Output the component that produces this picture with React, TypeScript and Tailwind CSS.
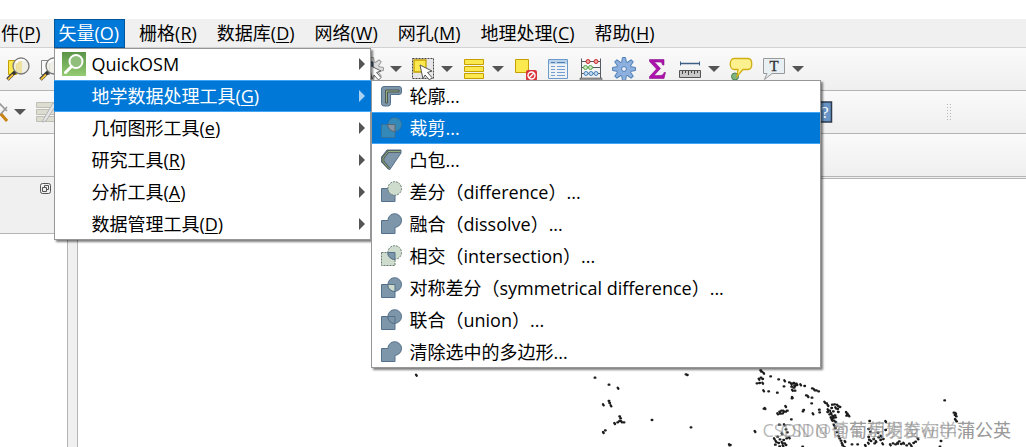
import type { ReactNode } from "react";

// ─── Types ──────────────────────────────────────────────────────────────────

interface MenuEntry {
  label: string;
  /** Mnemonic letter shown underlined in parentheses. */
  hotkey?: string;
  active?: boolean;
}

interface ToolEntry {
  name: string;
  icon?: ReactNode;
  dropdown?: boolean;
}

// ─── Data ───────────────────────────────────────────────────────────────────

const MENU_BAR: MenuEntry[] = [
  { label: "件", hotkey: "P" },
  { label: "矢量", hotkey: "O", active: true },
  { label: "栅格", hotkey: "R" },
  { label: "数据库", hotkey: "D" },
  { label: "网络", hotkey: "W" },
  { label: "网孔", hotkey: "M" },
  { label: "地理处理", hotkey: "C" },
  { label: "帮助", hotkey: "H" },
];

const VECTOR_MENU: MenuEntry[] = [
  { label: "QuickOSM" },
  { label: "地学数据处理工具", hotkey: "G", active: true },
  { label: "几何图形工具", hotkey: "e" },
  { label: "研究工具", hotkey: "R" },
  { label: "分析工具", hotkey: "A" },
  { label: "数据管理工具", hotkey: "D" },
];

// Map features, in thirds of a pixel
const POINTS: [number, number][] = [
  [-429, 41], [107, 50], [149, 71], [176, 80], [380, 40], [384, 42], [132, 130],
  [149, 120], [151, 126], [155, 133], [181, 166], [184, 172], [166, 186], [175, 184],
  [181, 180], [187, 181], [194, 184], [138, 208], [132, 213], [278, 177], [395, 199],
  [510, 250], [513, 252], [511, 253], [587, 210], [604, 28], [607, 32], [613, 35],
  [593, 67], [601, 66], [599, 53], [605, 50], [610, 54], [610, 65], [634, 46],
  [658, 55], [676, 58], [674, 76], [690, 64], [696, 67], [703, 66], [711, 68],
  [706, 73], [697, 77], [704, 80], [699, 86], [707, 89], [713, 72], [724, 70],
  [736, 75], [759, 82], [765, 85], [771, 88], [778, 91], [613, 88], [628, 91],
  [654, 95], [699, 108], [698, 112], [741, 103], [746, 105], [758, 110], [757, 127],
  [796, 122], [802, 127], [614, 143], [617, 141], [733, 147], [731, 151], [761, 157],
  [780, 146], [781, 154], [679, 135], [661, 152], [667, 149], [673, 149], [679, 152],
  [684, 149], [655, 157], [663, 158], [670, 157], [806, 132], [819, 131], [826, 130],
  [834, 131], [838, 136], [842, 138], [829, 139], [835, 144], [817, 141], [806, 145],
  [811, 149], [805, 153], [815, 155], [822, 151], [811, 160], [820, 164], [827, 163],
  [837, 153], [815, 169], [822, 171], [829, 169], [818, 176], [824, 179], [829, 183],
  [861, 153], [864, 158], [862, 164], [869, 163], [1156, 118], [1184, 155],
  [1189, 156], [1187, 162], [1191, 166], [1188, 174], [1192, 181], [696, 175],
  [675, 190], [660, 191], [680, 205], [668, 217], [684, 214], [931, 180], [979, 180],
  [1145, 240], [1142, 257], [645, 232], [655, 227], [662, 235], [650, 240],
  [673, 237], [682, 232], [690, 229], [648, 251], [658, 246], [668, 243], [676, 247],
  [661, 256], [671, 253], [680, 252], [730, 257], [824, 191], [828, 201], [833, 213],
  [838, 224], [841, 232], [845, 239], [848, 246], [850, 253], [855, 258], [857, 240],
  [878, 250], [895, 250], [918, 252], [928, 228], [930, 236], [927, 245], [935, 240],
  [943, 234], [950, 240], [946, 247], [958, 229], [965, 224], [964, 237], [972, 234],
  [970, 247], [956, 215], [979, 207], [993, 250], [1001, 247], [1009, 250],
  [1015, 245], [1020, 241], [1026, 249], [1033, 245], [1042, 253], [1050, 248],
  [1056, 253], [1063, 246], [1069, 242], [1076, 232], [928, 204], [933, 213],
];

// ─── Toolbar icons ──────────────────────────────────────────────────────────

function Icon({ children }: Readonly<{ children: ReactNode }>) {
  return (
    <svg className="size-6 shrink-0" viewBox="0 0 24 24" fill="none" aria-hidden="true">
      {children}
    </svg>
  );
}

function ZoomIcon({ filled }: Readonly<{ filled?: boolean }>) {
  return (
    <Icon>
      <path
        d="M2.500 3.500h8v14h-8z"
        fill={filled ? "#fce94f" : "#fafafa"}
        stroke={filled ? "#c4a000" : "#888"}
      />
      <path d="M10 14 L1.500 22.500" stroke="#333" strokeWidth="3.600" />
      <path d="M7 17.500 L2 22.500" stroke="#eebd3e" strokeWidth="2" />
      <circle cx="15" cy="9" r="8" fill="#eeeee6" fillOpacity="0.88" stroke="#777" strokeWidth="1.300" />
      {filled && <path d="M10 4h6v12h-3l-3-3z" fill="#eddc83" fillOpacity="0.7" />}
      <path d="M10 6c2-4 7-4 9-2" stroke="#fff" strokeWidth="2" />
    </Icon>
  );
}

function GearShape({ fill = "#8eb0df", stroke = "#4d80b5" }: Readonly<{ fill?: string; stroke?: string }>) {
  const angles = [0, 45, 90, 135, 180, 225, 270, 315];
  return (
    <g>
      {angles.map((a) => (
        <path key={a} d="M9.500 6l1-5.500h3l1 5.500z" fill={fill} stroke={stroke} transform={`rotate(${a} 12 12)`} />
      ))}
      <circle cx="12" cy="12" r="7" fill={fill} />
      <circle cx="12" cy="12" r="2.400" fill="#eef" stroke={stroke} />
    </g>
  );
}

const cursorPath = "M9 8l12 6-4.500 1.500 4.500 5-2.500 2.500-4.500-5-2 4z";

const SelectFeaturesIcon = (
  <Icon>
    <path d="M1.500 1.500h21v20h-21z" fill="#e6e6e6" stroke="#444" strokeDasharray="2 1" />
    <path d="M3 3h12v12H3z" fill="#fce94f" stroke="#c4a000" strokeWidth="1.300" />
    <path d={cursorPath} fill="#fff" stroke="#555" />
  </Icon>
);

const SelectGearIcon = (
  <Icon>
    <GearShape fill="#ddd" stroke="#999" />
    <path d="M4 5h9v11H4z" fill="#51739c" stroke="#334" />
    <path d={cursorPath} fill="#fff" stroke="#666" />
  </Icon>
);

const SelectFormIcon = (
  <Icon>
    <path d="M2.500 2.500h19v5h-19zM2.500 9.500h19v5h-19zM2.500 16.500h19v5h-19z" fill="#fce94f" stroke="#c4a000" />
  </Icon>
);

const DeselectIcon = (
  <Icon>
    <path d="M2.500 2.500h13v13h-13z" fill="#fce94f" stroke="#c4a000" />
    <rect x="13" y="13" width="11" height="11" rx="2" fill="#d9343c" />
    <circle cx="18.500" cy="18.500" r="3.500" stroke="#fff" strokeWidth="1.400" />
    <path d="M16 21l5-5" stroke="#fff" strokeWidth="1.400" />
  </Icon>
);

const TableIcon = (
  <Icon>
    <path d="M2.500 2.500h19v19h-19z" fill="#eef2f5" stroke="#6c9bcb" />
    <path d="M3 3h18v4H3z" fill="#b9d2ea" />
    <path d="M5 5.500h4M11 5.500h8" stroke="#4a7eb5" />
    <path
      d="M5 9.500h4M11 9.500h8M5 12.500h4M11 12.500h8M5 15.500h4M11 15.500h8M5 18.500h4M11 18.500h8"
      stroke="#729fcf"
    />
  </Icon>
);

const AbacusIcon = (
  <Icon>
    <path d="M2.500 1.500v21M21.500 1.500v21M3 4.500h18M3 10.500h18M3 16.500h18" stroke="#555b60" />
    <path d="M1 21h22v2.500H1z" fill="#999" stroke="#555" strokeWidth="0.600" />
    <g fill="#f3a2a2" stroke="#c62828">
      <circle cx="9" cy="4.500" r="2" />
      <circle cx="17" cy="4.500" r="2" />
    </g>
    <g fill="#cce8c2" stroke="#5aa64b">
      <circle cx="6.500" cy="10.500" r="2" />
      <circle cx="11.500" cy="10.500" r="2" />
    </g>
    <g fill="#c5dcf1" stroke="#4a84ba">
      <circle cx="7" cy="16.500" r="2" />
      <circle cx="12" cy="16.500" r="2" />
      <circle cx="17" cy="16.500" r="2" />
    </g>
  </Icon>
);

const SigmaIcon = (
  <Icon>
    <path
      d="M4.500 2.500h14.500v5.500h-1.500c-.5-2.500-1.500-3-3.500-3H9.500l6 6.500-6.500 7h6c2.500 0 3.500-1 4-3h1.500l-1.500 6H4.500v-2l7-7.500-7-7.500z"
      fill="#ad10ad"
      stroke="#8a1a8a"
      strokeWidth="0.600"
    />
  </Icon>
);

const RulerIcon = (
  <Icon>
    <path d="M2.500 4.500v4M21.500 4.500v4" stroke="#3d5f86" />
    <path d="M2 6.500h20" stroke="#3d5f86" strokeWidth="1.500" />
    <path d="M1.500 13.500h21v7h-21z" fill="#c8c8c8" stroke="#555" />
    <path d="M4.500 14v3M7.500 14v2M10.500 14v4M13.500 14v2M16.500 14v3M19.500 14v2" stroke="#444" />
  </Icon>
);

const TipIcon = (
  <Icon>
    <circle cx="6" cy="19.500" r="3.500" fill="#7fb380" stroke="#4b8250" />
    <path
      d="M5 1.500h14c5 0 5 11 0 11h-5l-6 7 1-7H5c-5 0-5-11 0-11z"
      fill="#fcf08f"
      stroke="#d0ae14"
      strokeWidth="1.300"
    />
  </Icon>
);

const TextNoteIcon = (
  <Icon>
    <path d="M1.500 1.500h21v15H10l-7.500 6 2.500-6H1.500z" fill="#e9f0f4" stroke="#999" />
    <text x="12" y="14" textAnchor="middle" fontSize="15" fontFamily="Liberation Serif, serif" fill="#333" stroke="#333" strokeWidth="0.300">
      T
    </text>
  </Icon>
);

const CutPencilIcon = (
  <Icon>
    <path d="M15 3l8 8M16 15l7-8" stroke="#999" strokeWidth="1.600" />
    <path d="M17 14l6 7" stroke="#c88416" strokeWidth="3" />
  </Icon>
);

const EditRowsIcon = (
  <Icon>
    <path d="M1.500 2.500h18v5h-18zM1.500 9.500h18v5h-18zM1.500 16.500h18v5h-18z" fill="#dcdcd0" stroke="#bfbfb5" />
    <path d="M8 20L18 3l3 2-10 16-4 1z" fill="#e4e4e4" stroke="#b5b5b5" />
  </Icon>
);

const HelpIcon = (
  <Icon>
    <path d="M2.500 2h20v20h-20z" fill="#6794c6" stroke="#2f3b4c" strokeWidth="1.500" />
    <text x="16" y="18" textAnchor="middle" fontSize="16" fontFamily="Liberation Serif, serif" fill="#fff">
      ?
    </text>
  </Icon>
);

const SELECTION_TOOLS: ToolEntry[] = [
  { name: "select-by-value", icon: SelectGearIcon, dropdown: true },
  { name: "select-features", icon: SelectFeaturesIcon, dropdown: true },
  { name: "select-by-form", icon: SelectFormIcon, dropdown: true },
  { name: "deselect", icon: DeselectIcon },
  { name: "attribute-table", icon: TableIcon },
  { name: "field-calculator", icon: AbacusIcon },
  { name: "toolbox", icon: <Icon><GearShape /></Icon> },
  { name: "statistics", icon: SigmaIcon },
  { name: "measure", icon: RulerIcon, dropdown: true },
  { name: "map-tips", icon: TipIcon },
  { name: "annotation", icon: TextNoteIcon, dropdown: true },
];

// ─── Geoprocessing icons ────────────────────────────────────────────────────

const SLATE = "#7e96a9";
const EDGE = "#54708a";
const PALE = "#cddccd";
const LENS = "M7.700 8.500H15V15.500A7 7 0 0 1 7.700 8.500z";

function Square({ fill, dashed, stroke = EDGE }: Readonly<{ fill: string; dashed?: boolean; stroke?: string }>) {
  return <path d="M1.500 8.500H15v13H1.500z" fill={fill} stroke={stroke} strokeDasharray={dashed ? "2 1" : undefined} />;
}

function Disc({ fill, dashed, stroke = EDGE }: Readonly<{ fill: string; dashed?: boolean; stroke?: string }>) {
  return <circle cx="14.700" cy="8.500" r="6.800" fill={fill} stroke={stroke} strokeDasharray={dashed ? "2 1" : undefined} />;
}

const DissolveIcon = (
  <Icon>
    <path d="M1.500 8.500H7.900a6.800 6.800 0 1 1 7.100 6.800V21.500H1.500z" fill={SLATE} stroke={EDGE} />
  </Icon>
);

const GEO_TOOLS: { label: string; icon: ReactNode; active?: boolean }[] = [
  {
    label: "轮廓...",
    icon: (
      <Icon>
        <path
          d="M4 2.500h15q2.500 0 2.500 2.500v3q0 2.500-2.500 2.500h-8.500v9q0 2.500-2.500 2.500H4q-2.500 0-2.500-2.500V5q0-2.500 2.500-2.500z"
          fill={SLATE}
          stroke={EDGE}
        />
        <path d="M5.500 19V6H19v2H7.500v11z" fill="#93b079" stroke="#4c565b" />
      </Icon>
    ),
  },
  {
    label: "裁剪...",
    active: true,
    icon: (
      <Icon>
        <Square fill="#338ab9" stroke="#426b89" dashed />
        <Disc fill="#338ab9" stroke="#426b89" dashed />
        <path d={LENS} fill="#8296a8" stroke="#596873" />
      </Icon>
    ),
  },
  {
    label: "凸包...",
    icon: (
      <Icon>
        <path d="M1.500 9L7 2h14v3L9.500 22 1.500 14z" fill={SLATE} stroke={EDGE} />
        <path d="M20.500 3.500H8L3 10v3.500l6 7" stroke="#4c565b" strokeWidth="2.600" />
        <path d="M20.500 3.500H8L3 10v3.500l6 7" stroke="#93b079" />
      </Icon>
    ),
  },
  { label: "差分（difference）...", icon: <Icon><Square fill={SLATE} /><Disc fill={PALE} stroke="#65776d" dashed /></Icon> },
  { label: "融合（dissolve）...", icon: DissolveIcon },
  {
    label: "相交（intersection）...",
    icon: (
      <Icon>
        <Square fill={PALE} stroke="#66776e" dashed />
        <Disc fill={PALE} stroke="#66776e" dashed />
        <path d={LENS} fill={SLATE} stroke={EDGE} />
      </Icon>
    ),
  },
  {
    label: "对称差分（symmetrical difference）...",
    icon: (
      <Icon>
        <Square fill={SLATE} />
        <Disc fill={SLATE} />
        <path d={LENS} fill={PALE} stroke={EDGE} />
      </Icon>
    ),
  },
  {
    label: "联合（union）...",
    icon: (
      <Icon>
        <Square fill={SLATE} />
        <Disc fill={SLATE} />
        <path d={LENS} fill={SLATE} stroke={EDGE} />
      </Icon>
    ),
  },
  { label: "清除选中的多边形...", icon: DissolveIcon },
];

// ─── Menus ──────────────────────────────────────────────────────────────────

function Label({ label, hotkey }: Readonly<MenuEntry>) {
  return (
    <span>
      {label}
      {hotkey && (
        <>
          (<span className="underline decoration-1 underline-offset-2">{hotkey}</span>)
        </>
      )}
    </span>
  );
}

const popup =
  "absolute bg-white text-black outline-1 -outline-offset-1 outline-[#979797] shadow-[2px_2px_2px_rgba(0,0,0,0.5)]";
const row = "flex h-8 w-full items-center gap-[5px] text-left whitespace-nowrap";
const rowActive = "border-y border-[#42a5f5] bg-[#0078d7] text-white";

function GeoprocessingMenu() {
  return (
    <ul role="menu" className={`${popup} top-0 left-full w-[450px]`}>
      {GEO_TOOLS.map((tool) => (
        <li key={tool.label} role="none">
          <button type="button" role="menuitem" className={`${row} pl-[9px] ${tool.active ? rowActive : ""}`}>
            {tool.icon}
            {tool.label}
          </button>
        </li>
      ))}
    </ul>
  );
}

function VectorMenu() {
  return (
    <ul role="menu" className={`${popup} top-full left-0 z-10 w-[317px]`}>
      {VECTOR_MENU.map((item) => (
        <li key={item.label} role="none" className="relative">
          <button type="button" role="menuitem" className={`${row} pr-1.5 pl-2 ${item.active ? rowActive : ""}`}>
            <span className="size-6 shrink-0">{item.label === "QuickOSM" && <QuickOsmIcon />}</span>
            <Label {...item} />
            <svg className="ml-auto h-3 w-1.5" viewBox="0 0 6 12" aria-hidden="true">
              <path d="M0 0l6 6-6 6z" fill={item.active ? "#a9d3f5" : "#555"} />
            </svg>
          </button>
          {item.active && <GeoprocessingMenu />}
        </li>
      ))}
    </ul>
  );
}

function QuickOsmIcon() {
  return (
    <Icon>
      <defs>
        <linearGradient id="osm" x1="0" y1="0" x2="0" y2="1">
          <stop offset="0" stopColor="#5b9448" />
          <stop offset="1" stopColor="#93cc71" />
        </linearGradient>
      </defs>
      <path d="M0 0h24v24H0z" fill="url(#osm)" />
      <circle cx="14" cy="9.500" r="6.500" fill="#8fbf7b" stroke="#fff" strokeWidth="2" />
      <path d="M9.500 14.500L3.500 20.500" stroke="#fff" strokeWidth="3" strokeLinecap="round" />
    </Icon>
  );
}

function MenuBar() {
  return (
    <nav className="mt-[19px] border-b border-[#d2d2d2] bg-[#f0f0f0]">
      <ul role="menubar" className="-mb-px flex gap-[10px]">
        {MENU_BAR.map((item, i) => (
          <li key={item.label} role="none" className="relative">
            <button
              type="button"
              role="menuitem"
              className={`block h-[29px] border whitespace-nowrap ${i === 0 ? "pr-[3px]" : "pr-[5px] pl-[3px]"} ${
                item.active ? "border-[#005499] bg-[#0078d7] text-white" : "border-transparent"
              }`}
            >
              <Label {...item} />
            </button>
            {item.active && <VectorMenu />}
          </li>
        ))}
      </ul>
    </nav>
  );
}

// ─── Toolbars ───────────────────────────────────────────────────────────────

function Tool({ name, icon, dropdown }: Readonly<ToolEntry>) {
  return (
    <button type="button" aria-label={name} className="flex shrink-0 items-center gap-1.5">
      {icon}
      {dropdown && (
        <svg className="h-1.5 w-3" viewBox="0 0 12 6" aria-hidden="true">
          <path d="M0 0h12L6 6z" fill="#555" />
        </svg>
      )}
    </button>
  );
}

function Toolbar({ children }: Readonly<{ children?: ReactNode }>) {
  return (
    <div
      role="toolbar"
      className="flex h-[43px] items-center gap-[9px] overflow-hidden border-b border-[#b4b4b4] bg-linear-to-b from-[#fafafa] to-[#efefef]"
    >
      {children}
    </div>
  );
}

// ─── Map ────────────────────────────────────────────────────────────────────

function MapCanvas() {
  const d = POINTS.map(([x, y], i) => `M${x} ${y}${i % 3 === 0 ? "l2 3" : "h2"}`).join("");
  return (
    <section aria-label="map" className="relative min-w-0 flex-1 overflow-hidden border-t border-[#b4b4b4] bg-white">
      <svg className="h-[269px] w-[947px]" viewBox="-1443 -546 2841 807" aria-hidden="true">
        <path d={d} stroke="#1c1c1c" strokeWidth="7" strokeLinecap="round" />
      </svg>
      <div className="absolute right-[15px] bottom-1 text-right text-[18px] leading-7 whitespace-nowrap text-[#888]/60">
        <p>CSDN @葡萄玥发奋with蒲公英</p>
        <p className="absolute top-0 right-0">CSDN @葡萄玥发在学蒲公英</p>
      </div>
    </section>
  );
}

function LayerDock() {
  return (
    <aside className="flex w-[67px] shrink-0 flex-col">
      <div className="flex h-[57px] items-start justify-end border-b border-[#b4b4b4] bg-[#f0f0f0] pt-1.5 pr-4">
        <button type="button" aria-label="float">
          <svg className="size-[11px]" viewBox="0 0 11 11" fill="none" stroke="#555" aria-hidden="true">
            <rect x="0.500" y="0.500" width="10" height="10" rx="2" />
            <path d="M4.500 4V2.500h4v4H7M2.500 4.500h4v4h-4z" />
          </svg>
        </button>
      </div>
      <div className="flex-1 bg-white" />
    </aside>
  );
}

// ─── App ────────────────────────────────────────────────────────────────────

export default function App() {
  return (
    <div className="flex min-h-screen flex-col overflow-hidden bg-white font-['Open_Sans','Noto_Sans_CJK_SC',sans-serif] text-[18px] leading-[27px] text-black">
      <MenuBar />
      <Toolbar>
        <div className="flex gap-[9px] pl-1.5">
          <Tool name="zoom-selection" icon={<ZoomIcon filled />} />
          <Tool name="zoom-layer" icon={<ZoomIcon />} />
        </div>
        <div className="w-[279px] shrink-0" />
        {SELECTION_TOOLS.map((tool) => (
          <Tool key={tool.name} {...tool} />
        ))}
      </Toolbar>
      <Toolbar>
        <div className="-ml-4 flex gap-[9px]">
          <Tool name="edits" icon={CutPencilIcon} dropdown />
          <Tool name="edit-rows" icon={EditRowsIcon} />
        </div>
        <div className="w-[732px] shrink-0" />
        <Tool name="help" icon={HelpIcon} />
        <svg className="ml-[104px] h-[18px] w-[6px] shrink-0" viewBox="0 0 6 18" aria-hidden="true">
          <path d="M1.500 1v17M4.500 1v17" stroke="#b5b5b5" strokeDasharray="1 2" />
        </svg>
      </Toolbar>
      <Toolbar />
      <main className="flex flex-1 bg-[#f0f0f0]">
        <LayerDock />
        <div className="w-[11px] shrink-0 border-x border-[#b4b4b4] bg-[#f0f0f0]" />
        <div className="flex min-w-0 flex-1 pt-px">
          <MapCanvas />
        </div>
      </main>
    </div>
  );
}
